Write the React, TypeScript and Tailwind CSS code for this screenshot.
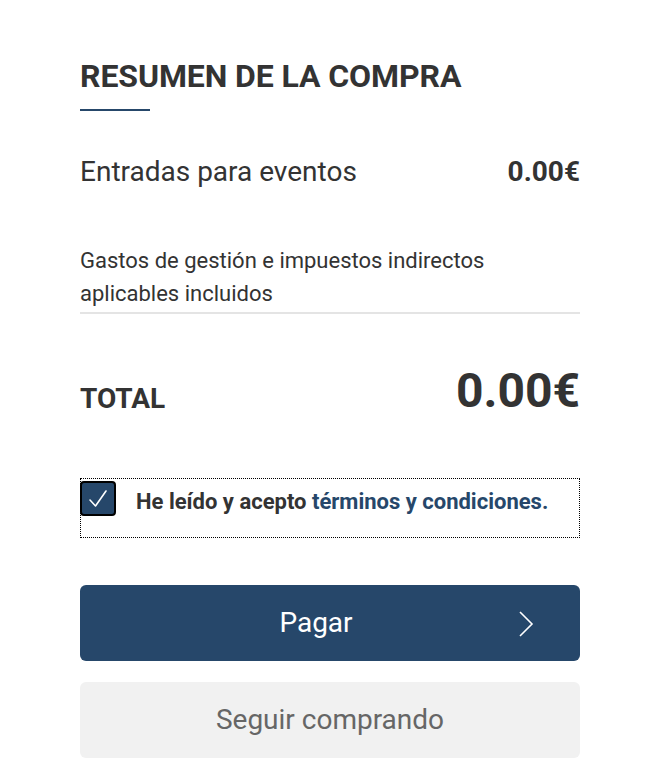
import React, { useState } from "react";

export default function App() {
  const [accepted, setAccepted] = useState(true);

  return (
    <div className="min-h-screen bg-white font-['Roboto',sans-serif] text-[#333333]">
      <div className="w-[500px] ml-[80px] pt-[57px]">
        <h2 className="text-[32px] leading-[38px] font-bold tracking-[-0.1px]">RESUMEN DE LA COMPRA</h2>
        <div className="w-[70px] h-[2px] bg-[#26476a] mt-[14px]" />

        <div className="flex justify-between items-center mt-[45px]">
          <span className="text-[28px] leading-[32px]">Entradas para eventos</span>
          <span className="text-[28px] leading-[32px] font-bold">0.00€</span>
        </div>

        <p className="mt-[56px] text-[22px] leading-[33px] pr-[80px] border-b-2 border-[#e4e4e4] pb-[2px]">
          Gastos de gestión e impuestos indirectos aplicables incluidos
        </p>

        <div className="flex justify-between items-end mt-[51px]">
          <span className="text-[28px] leading-[32px] font-bold mb-[2px]">TOTAL</span>
          <span className="text-[48px] leading-[52px] font-bold">0.00€</span>
        </div>

        <label className="mt-[61px] flex items-start gap-[20px] border border-dotted border-black h-[60px] cursor-pointer select-none">
          <input type="checkbox" className="hidden" checked={accepted} onChange={(e) => setAccepted(e.target.checked)} />
          <span className={"w-[36px] h-[35px] mt-[2px] -ml-[1px] rounded-[4px] border-2 border-black flex items-center justify-center " + (accepted ? "bg-[#26476a]" : "bg-white")}>
            {accepted && (
              <svg width="22" height="22" viewBox="0 0 22 22" fill="none">
                <path d="M3 12 L8.5 18 L19 3" stroke="white" strokeWidth="1.6" strokeLinecap="round" strokeLinejoin="round" />
              </svg>
            )}
          </span>
          <span className="text-[22px] leading-[26px] font-bold mt-[10px]">
            He leído y acepto <a href="#" className="text-[#26476a]">términos y condiciones.</a>
          </span>
        </label>

        <button className="mt-[47px] w-full h-[76px] rounded-[6px] bg-[#26476a] text-white text-[28px] relative flex items-center justify-center pr-[28px]">
          Pagar
          <svg className="absolute right-[46px] top-[26px]" width="16" height="26" viewBox="0 0 16 26" fill="none">
            <path d="M2 1 L14 13 L2 25" stroke="white" strokeWidth="1.6" />
          </svg>
        </button>

        <button className="mt-[21px] w-full h-[76px] rounded-[6px] bg-[#f1f1f1] text-[#666666] text-[28px] flex items-center justify-center">
          Seguir comprando
        </button>
      </div>
    </div>
  );
}
